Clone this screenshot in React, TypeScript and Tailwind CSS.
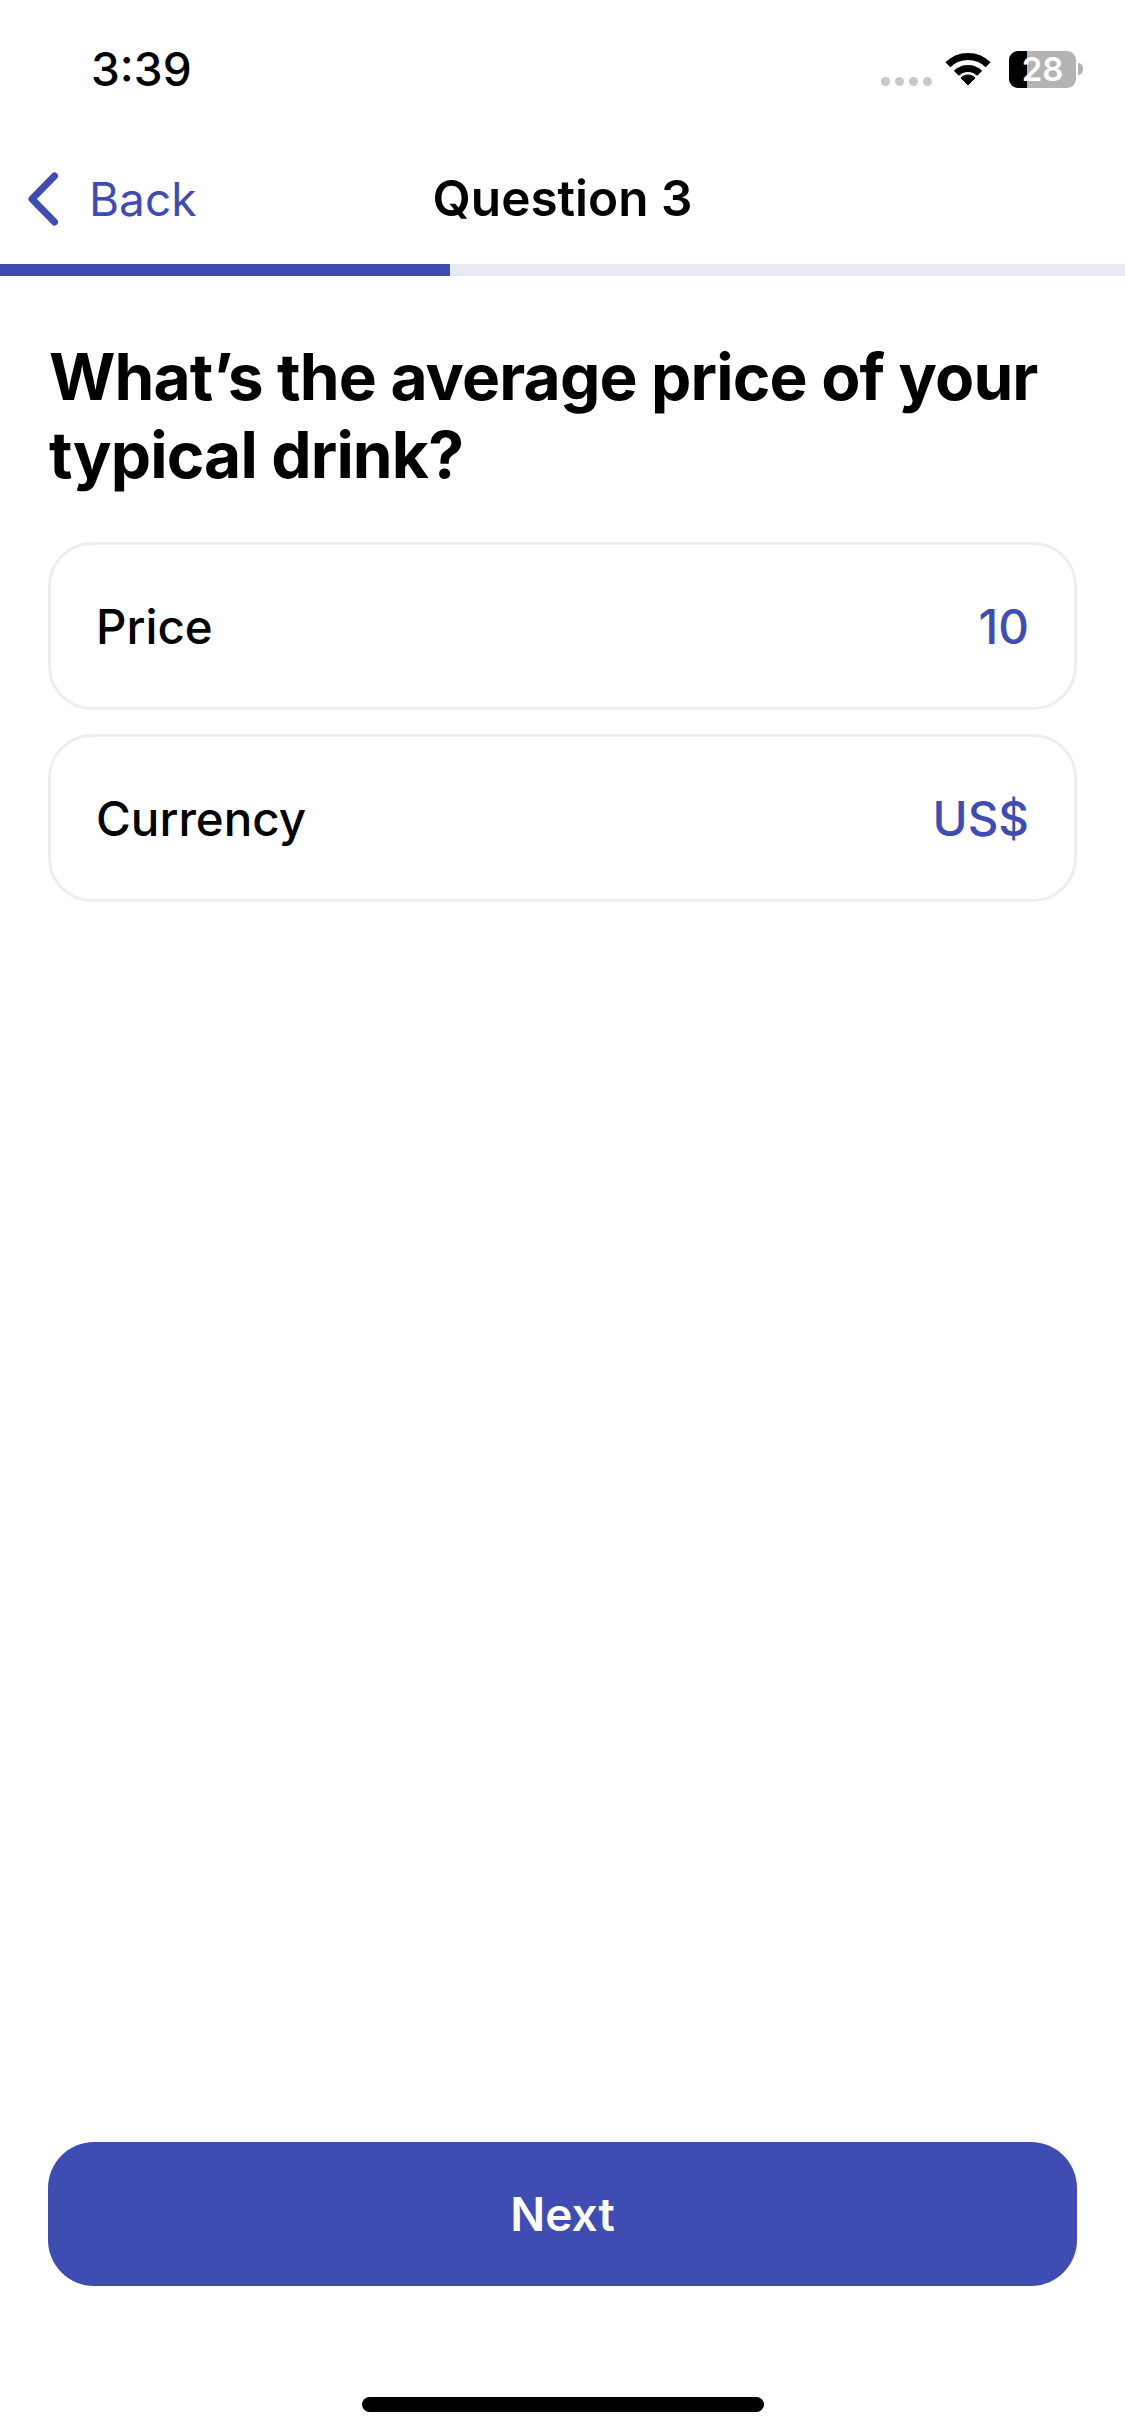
import React from 'react';

const rows = [
  { label: 'Price', value: '10' },
  { label: 'Currency', value: 'US$' },
];

const App: React.FC = () => {
  return <div className="flex flex-col h-[2436px] w-[1125px] bg-white text-black font-['Inter',sans-serif] overflow-hidden">
      {/* status bar */}
      <div className="flex items-center justify-between h-[138px] pl-[91px] pr-[42px]">
        <span className="text-[46px] leading-[56px] font-[550]">3:39</span>
        <div className="flex items-center">
          <div className="flex gap-[5px] mt-[25px] mr-[13px]">
            <span className="w-[9px] h-[9px] rounded-full bg-[#c8c8c8]"></span>
            <span className="w-[9px] h-[9px] rounded-full bg-[#c8c8c8]"></span>
            <span className="w-[9px] h-[9px] rounded-full bg-[#c8c8c8]"></span>
            <span className="w-[9px] h-[9px] rounded-full bg-[#c8c8c8]"></span>
          </div>
          <svg width="46" height="33" viewBox="0 0 46 33" className="mr-[18px]">
            <path d="M2.85 11.85 A28.5 28.5 0 0 1 43.15 11.85" fill="none" stroke="#000" strokeWidth="7" />
            <path d="M11.33 20.33 A16.5 16.5 0 0 1 34.67 20.33" fill="none" stroke="#000" strokeWidth="7" />
            <path d="M23 32 L15.9 24.9 A10 10 0 0 1 30.1 24.9 Z" fill="#000" stroke="#000" strokeWidth="1" strokeLinejoin="round" />
          </svg>
          <div className="relative flex w-[67px] h-[37px] rounded-[9px] bg-[#b3b3b3]">
            <div className="w-[18px] h-full rounded-l-[9px] bg-black"></div>
            <span className="absolute inset-0 flex items-center justify-center text-white text-[33px] leading-none font-semibold">28</span>
          </div>
          <div className="w-[5px] h-[12px] ml-[2px] rounded-r-full bg-[#b3b3b3]"></div>
        </div>
      </div>

      {/* nav */}
      <div className="relative flex items-center justify-center h-[126px] pb-[6px]">
        <div className="absolute left-[26px] inset-y-0 flex items-center pb-[5px] text-[#3f4db3]">
          <svg width="36" height="58" viewBox="0 0 36 58">
            <path d="M28.5 6 L6 29 L28.5 52" fill="none" stroke="currentColor" strokeWidth="7" strokeLinecap="round" strokeLinejoin="round" />
          </svg>
          <span className="ml-[27px] text-[46px] leading-[58px]">Back</span>
        </div>
        <span className="text-[49.5px] leading-[60px] font-semibold">Question 3</span>
      </div>

      {/* progress */}
      <div className="h-[12px] bg-[#e7e9f5]">
        <div className="h-full w-[450px] bg-[#3f4db3]"></div>
      </div>

      <div className="flex-1 flex flex-col px-[48px]">
        <h1 className="mt-[62px] ml-[1px] text-[64px] leading-[78px] font-bold tracking-[-0.85px]">
          What’s the average price of your typical drink?
        </h1>
        <div className="mt-[48px] flex flex-col gap-[24px]">
          {rows.map(r => <div key={r.label} className="flex items-center justify-between h-[168px] pt-[2px] px-[45px] rounded-[44px] border-[3px] border-[#eeeeee]">
              <span className="text-[47.5px] font-[550]">{r.label}</span>
              <span className="text-[47.5px] font-[550] text-[#3f4db3]">{r.value}</span>
            </div>)}
        </div>
        <button className="mt-auto h-[144px] rounded-[46px] bg-[#3f4db3] text-white text-[46px] font-semibold">
          Next
        </button>
      </div>

      {/* home indicator */}
      <div className="flex justify-center h-[150px] pt-[111px]">
        <div className="w-[402px] h-[15px] rounded-full bg-black"></div>
      </div>
    </div>;
};
export default App;
